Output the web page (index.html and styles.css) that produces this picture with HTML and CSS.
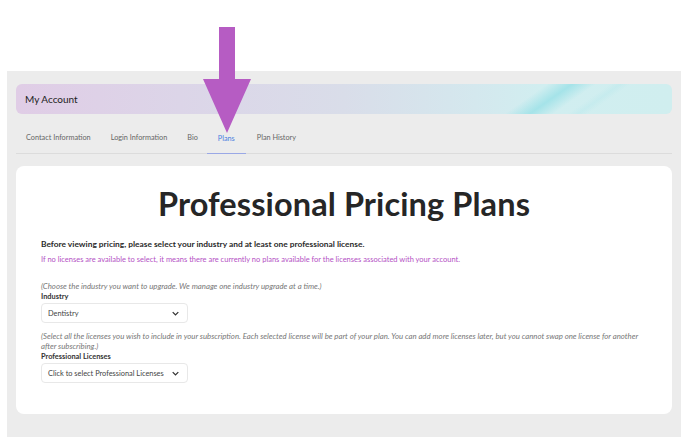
FILE: index.html
```html
<!DOCTYPE html>
<html>
<head>
<meta charset="utf-8">
<link rel="stylesheet" href="styles.css">
</head>
<body>
<div class="top"></div>
<div class="panel">
  <div class="banner">My Account</div>
  <nav class="tabs">
    <span class="tab">Contact Information</span>
    <span class="tab">Login Information</span>
    <span class="tab">Bio</span>
    <span class="tab active">Plans</span>
    <span class="tab">Plan History</span>
  </nav>
  <div class="card">
    <h1 class="title">Professional Pricing Plans</h1>
    <p class="lead">Before viewing pricing, please select your industry and at least one professional license.</p>
    <p class="note">If no licenses are available to select, it means there are currently no plans available for the licenses associated with your account.</p>
    <p class="hint first">(Choose the industry you want to upgrade. We manage one industry upgrade at a time.)</p>
    <div class="label">Industry</div>
    <div class="select"><span>Dentistry</span><svg class="chev" viewBox="0 0 10 6" width="7" height="5"><path d="M1 1l4 4 4-4" fill="none" stroke="#333" stroke-width="1.8"/></svg></div>
    <p class="hint">(Select all the licenses you wish to include in your subscription. Each selected license will be part of your plan. You can add more licenses later, but you cannot swap one license for another after subscribing.)</p>
    <div class="label">Professional Licenses</div>
    <div class="select"><span>Click to select Professional Licenses</span><svg class="chev" viewBox="0 0 10 6" width="7" height="5"><path d="M1 1l4 4 4-4" fill="none" stroke="#333" stroke-width="1.8"/></svg></div>
  </div>
</div>
<svg class="arrow" width="50" height="108" viewBox="0 0 50 108"><polygon points="17,0 33,0 33,52 49,52 25,106 1,52 17,52" fill="#b65cc3"/></svg>
</body>
</html>
```
FILE: styles.css
```css
* { box-sizing: border-box; }
html, body { margin: 0; background: #fff; }
body { width: 688px; height: 445px; position: relative; overflow: hidden; font-family: "Lato", "Noto Sans", sans-serif; color: #333; }
.top { height: 71px; }
.panel { margin-left: 7px; width: 674px; height: 366px; background: #ececec; padding: 13px 9px 0 9px; }
.banner { height: 30px; border-radius: 6px; padding-left: 9px; display: flex; align-items: center; font-size: 10px; color: #222;
  background:
    linear-gradient(145deg, rgba(160,226,232,0) 76%, rgba(160,226,232,0.9) 79.6%, rgba(160,226,232,0) 83%, rgba(175,230,235,0) 85%, rgba(175,230,235,0.3) 86.5%, rgba(175,230,235,0) 88%),
    linear-gradient(90deg, #e0cde6 0%, #dcd5e8 25%, #d9dde9 50%, #d4e8ee 70%, #d1eef0 80%, #d0eeef 100%); }
.tabs { display: flex; height: 40px; border-bottom: 1px solid #dcdcdc; padding-left: 10px; align-items: stretch; }
.tab { font-size: 7.3px; color: #666; display: flex; align-items: center; padding-top: 9px; margin-right: 20px; border-bottom: 1px solid transparent; }
.tab.active { color: #4a7fe0; border-bottom-color: #9aa8e6; padding-left: 11px; padding-right: 11px; margin-left: -11px; margin-right: 11px; margin-bottom: -1px; }
.card { margin-top: 12px; background: #fff; border-radius: 8px; height: 248px; padding: 20px 25px 0 25px; }
.title { margin: 0; text-align: center; font-size: 32.5px; font-weight: 700; color: #262626; line-height: 36px; letter-spacing: 0.1px; }
.lead { margin: 17px 0 0 0; font-size: 8.4px; font-weight: 700; color: #2a2a2a; line-height: 11px; }
.note { margin: 5px 0 0 0; font-size: 7.5px; color: #b451c4; line-height: 10px; }
.hint { margin: 0; font-size: 7.8px; font-style: italic; color: #777; line-height: 10px; }
.hint.first { margin-top: 16px; }
.label { font-size: 7.4px; font-weight: 700; color: #333; line-height: 11px; }
.select { width: 147px; height: 20px; border: 1px solid #e8e8e8; border-radius: 4px; margin-top: 1px; margin-bottom: 8px; display: flex; align-items: center; justify-content: space-between; padding: 0 8px 0 6px; font-size: 7.4px; color: #444; }
.arrow { position: absolute; left: 202px; top: 27px; }
```
